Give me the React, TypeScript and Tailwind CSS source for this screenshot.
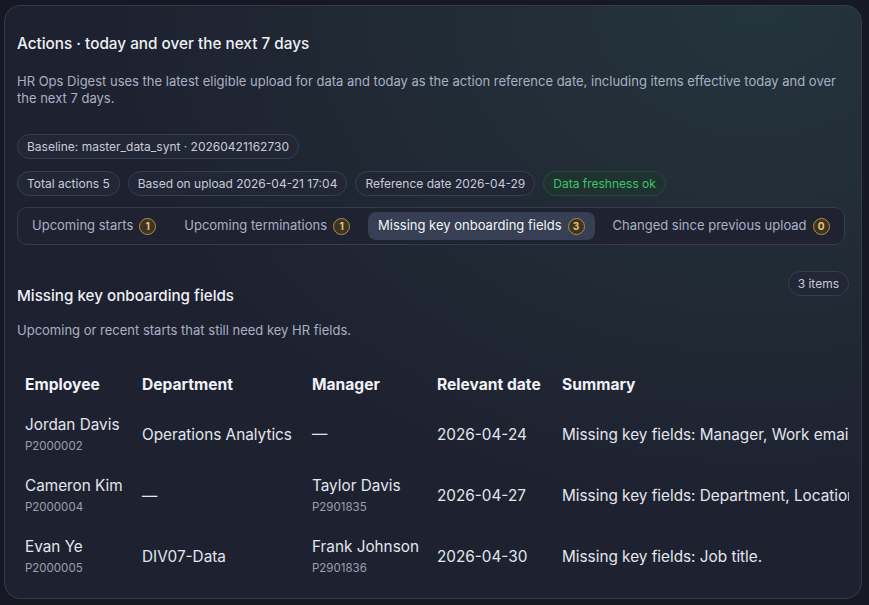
const rows = [
  {
    name: "Jordan Davis",
    id: "P2000002",
    dept: "Operations Analytics",
    manager: null as null | { name: string; id: string },
    date: "2026-04-24",
    summary: "Missing key fields: Manager, Work email, Location.",
  },
  {
    name: "Cameron Kim",
    id: "P2000004",
    dept: null as null | string,
    manager: { name: "Taylor Davis", id: "P2901835" },
    date: "2026-04-27",
    summary: "Missing key fields: Department, Location, Work email.",
  },
  {
    name: "Evan Ye",
    id: "P2000005",
    dept: "DIV07-Data",
    manager: { name: "Frank Johnson", id: "P2901836" },
    date: "2026-04-30",
    summary: "Missing key fields: Job title.",
  },
];

const tabs = [
  { label: "Upcoming starts", count: 1 },
  { label: "Upcoming terminations", count: 1 },
  { label: "Missing key onboarding fields", count: 3, active: true },
  { label: "Changed since previous upload", count: 0 },
];

function Pill({ children, green }: { children: React.ReactNode; green?: boolean }) {
  return (
    <span
      className={
        green
          ? "inline-flex h-[25px] items-center whitespace-nowrap rounded-full border border-[#2c4540] bg-[#1f3230] px-[9px] text-[12px] text-[#3cc46c]"
          : "inline-flex h-[25px] items-center whitespace-nowrap rounded-full border border-[#363d50] bg-[#222736] px-[9px] text-[12px] text-[#c8ccd8]"
      }
    >
      {children}
    </span>
  );
}

function CountBadge({ n }: { n: number }) {
  return (
    <span className="inline-flex h-[17px] w-[17px] items-center justify-center rounded-full border-[1.5px] border-[#b8893e] bg-[#3a3526] text-[10px] font-bold leading-none text-[#f3c266]">
      {n}
    </span>
  );
}

export default function App() {
  return (
    <div className="min-h-[605px] bg-[#161924] pb-1 pl-1 pr-[7px] pt-[5px] font-['Inter',sans-serif]">
      <div className="h-[594px] overflow-hidden rounded-2xl border border-[#323a4c] bg-[#1e2230] bg-[radial-gradient(ellipse_at_88%_0%,rgba(44,78,76,0.42),transparent_60%)] px-3 pt-[26px]">
        <h1 className="text-[15.3px] font-medium leading-6 text-[#eef0f5]">
          Actions · today and over the next 7 days
        </h1>
        <p className="mt-[17px] text-[13px] leading-[17px] text-[#aab0c4]">
          HR Ops Digest uses the latest eligible upload for data and today as the action reference date, including items
          effective today and over the next 7 days.
        </p>

        <div className="mt-[27px] flex">
          <Pill>Baseline: master_data_synt · 20260421162730</Pill>
        </div>
        <div className="mt-[12px] flex gap-2">
          <Pill>Total actions 5</Pill>
          <Pill>Based on upload 2026-04-21 17:04</Pill>
          <Pill>Reference date 2026-04-29</Pill>
          <Pill green>Data freshness ok</Pill>
        </div>

        <div className="mt-[11px] flex w-fit gap-2 rounded-[10px] border border-[#343b4e] bg-[#1f2331] p-1">
          {tabs.map((t) => (
            <div
              key={t.label}
              className={
                t.active
                  ? "flex h-[28px] items-center gap-[6px] whitespace-nowrap rounded-lg bg-[#363f53] px-2.5 text-[13px] text-[#f2f4f8]"
                  : "flex h-[28px] items-center gap-[6px] whitespace-nowrap rounded-lg px-2.5 text-[13px] text-[#aab0c4]"
              }
            >
              <span>{t.label}</span>
              <CountBadge n={t.count} />
            </div>
          ))}
        </div>

        <div className="mt-[26px] flex items-end justify-between">
          <h2 className="text-[15.2px] font-medium leading-6 text-[#eef0f5]">Missing key onboarding fields</h2>
          <span className="mb-[12px] inline-flex h-[25px] items-center rounded-full border border-[#363d50] bg-[#222736] px-[9px] text-[12px] text-[#c8ccd8]">
            3 items
          </span>
        </div>
        <p className="mt-[13px] text-[13px] leading-[18px] text-[#aab0c4]">
          Upcoming or recent starts that still need key HR fields.
        </p>

        <div className="mt-[28px] overflow-hidden">
          <table className="w-max table-fixed border-collapse text-left">
            <thead>
              <tr className="text-[15.6px] font-bold text-[#f0f2f7]">
                <th className="w-[117px] px-2 py-2 leading-5">Employee</th>
                <th className="w-[170px] px-2 py-2 leading-5">Department</th>
                <th className="w-[125px] px-2 py-2 leading-5">Manager</th>
                <th className="w-[125px] px-2 py-2 leading-5">Relevant date</th>
                <th className="w-[420px] px-2 py-2 leading-5">Summary</th>
              </tr>
            </thead>
            <tbody className="text-[15.3px] text-[#e3e6ed]">
              {rows.map((r) => (
                <tr key={r.id} className="h-[61px]">
                  <td className="px-2 pt-[2px] align-middle">
                    <div className="whitespace-nowrap leading-5">{r.name}</div>
                    <div className="mt-[3px] text-[11.5px] leading-4 text-[#9aa0b1]">{r.id}</div>
                  </td>
                  <td className="whitespace-nowrap px-2 pt-[2px] align-middle leading-5">{r.dept ?? "—"}</td>
                  <td className="px-2 pt-[2px] align-middle">
                    {r.manager ? (
                      <>
                        <div className="whitespace-nowrap leading-5">{r.manager.name}</div>
                        <div className="mt-[3px] text-[11.5px] leading-4 text-[#9aa0b1]">{r.manager.id}</div>
                      </>
                    ) : (
                      <span className="leading-5">—</span>
                    )}
                  </td>
                  <td className="px-2 pt-[2px] align-middle leading-5">{r.date}</td>
                  <td className="whitespace-nowrap px-2 pt-[2px] align-middle leading-5">{r.summary}</td>
                </tr>
              ))}
            </tbody>
          </table>
        </div>
      </div>
    </div>
  );
}
